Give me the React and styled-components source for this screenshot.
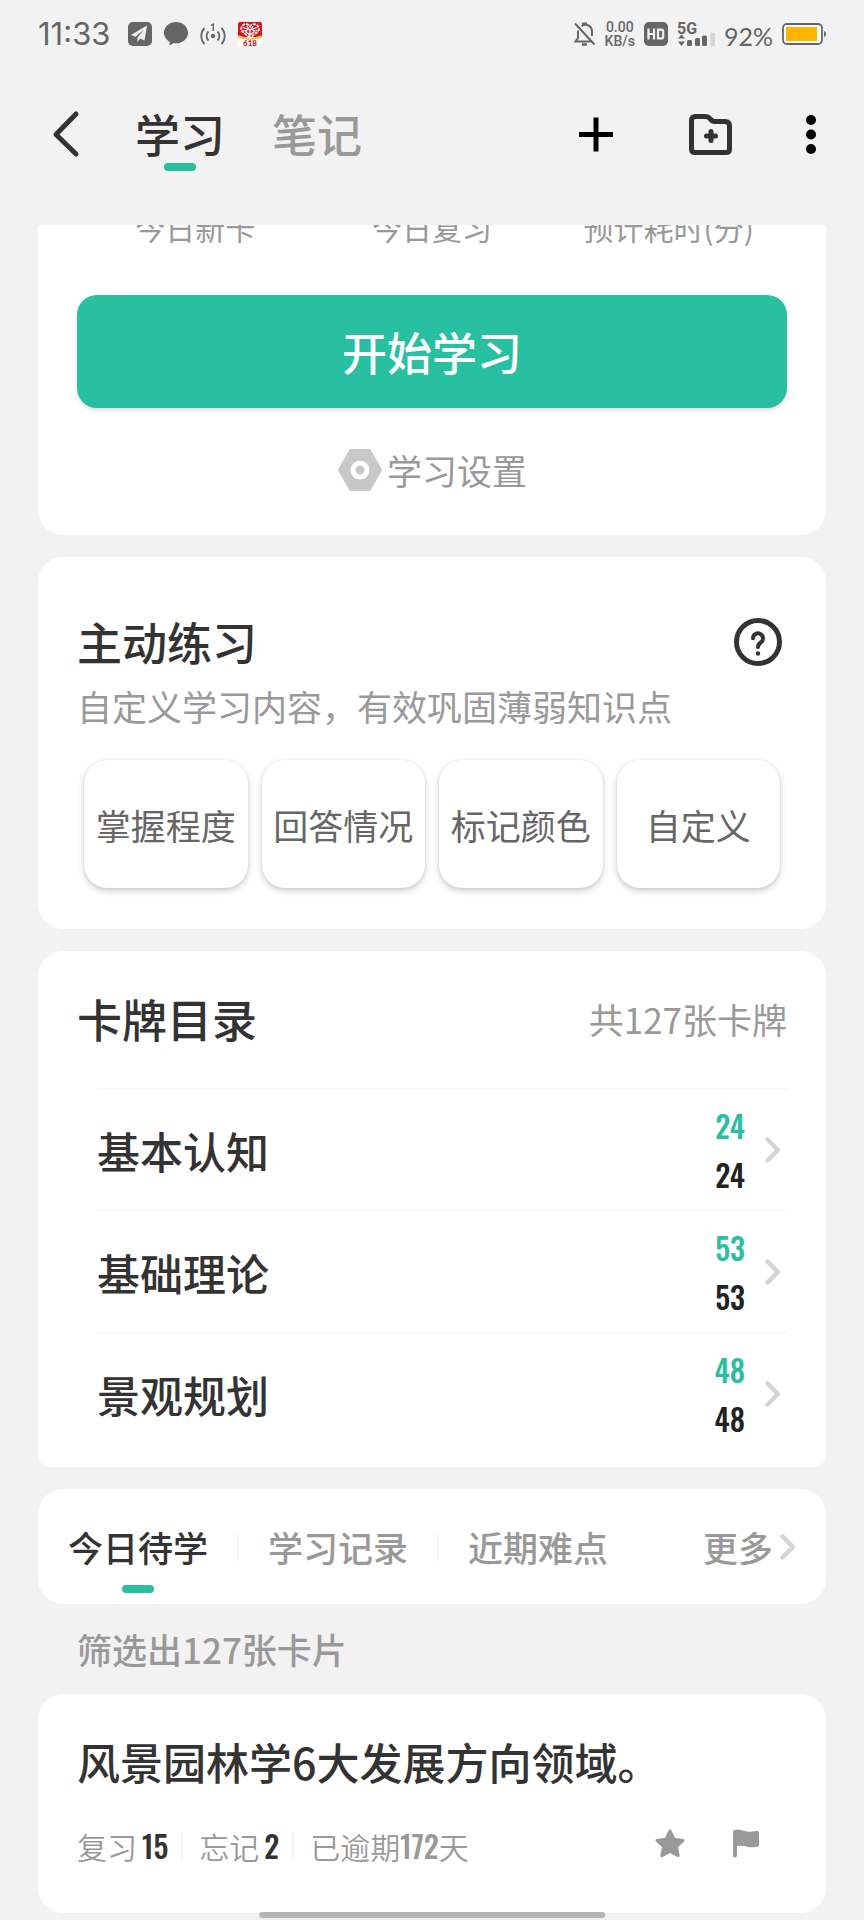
import React, { useState } from "react";
import styled, { createGlobalStyle } from "styled-components";

const GlobalStyle = createGlobalStyle`
  * { box-sizing: border-box; }
  body {
    margin: 0;
    background: #f2f2f2;
    color: #333;
    font-family: "Noto Sans CJK SC", sans-serif;
  }
  button {
    margin: 0;
    padding: 0;
    border: 0;
    background: none;
    color: inherit;
    font: inherit;
    cursor: pointer;
  }
  h1, h2, p, ul { margin: 0; padding: 0; list-style: none; }
  svg { display: block; flex: none; overflow: visible; }
`;

const green = "#29bfa1";
const narrow = '"Oswald", "Roboto Condensed", "Liberation Sans Narrow", "Liberation Sans", sans-serif';

const Screen = styled.div`
  display: flex;
  flex-direction: column;
  min-height: 100vh;
`;

/* Status bar */
const StatusBar = styled.div`
  display: flex;
  align-items: center;
  justify-content: space-between;
  height: 68px;
  padding: 0 38px;
  color: #666;
`;
const StatusGroup = styled.div`
  display: flex;
  align-items: center;
  gap: ${(p) => p.$gap}px;
`;
const Clock = styled.span`
  min-width: 78px;
  font: 400 31px/38px Inter, sans-serif;
`;
const NetSpeed = styled.span`
  display: flex;
  flex-direction: column;
  align-items: center;
  font: 500 14px/14px Roboto, sans-serif;
`;
const Percent = styled.span`
  padding-top: 4px;
  font: 400 25px/32px Lato, sans-serif;
`;

/* Header */
const Header = styled.header`
  display: flex;
  align-items: center;
  height: 132px;
  margin-bottom: 25px;
  padding: 0 38px;
`;
const BackButton = styled.button`
  display: flex;
  padding: 8px 15px;
`;
const HeaderTabs = styled.nav`
  display: flex;
  gap: 47px;
  margin-left: 40px;
`;
const HeaderTab = styled.button`
  display: flex;
  flex-direction: column;
  align-items: center;
  gap: 1px;
  padding-top: 9px;
  font-size: 45px;
  line-height: 56px;
  font-weight: 500;
  color: ${(p) => (p.$active ? "#333" : "#999")};
`;
const Marker = styled.span`
  width: 32px;
  height: 8px;
  border-radius: 4px;
  background: ${(p) => (p.$active ? green : "transparent")};
`;
const Actions = styled.div`
  display: flex;
  gap: 55px;
  margin-left: auto;
`;
const IconButton = styled.button`
  display: flex;
  justify-content: center;
  width: ${(p) => p.$width}px;
`;

/* Cards */
const Content = styled.main`
  display: flex;
  flex-direction: column;
  gap: 22px;
  padding: 0 38px 7px;
`;
const Card = styled.section`
  padding: ${(p) => p.$pad};
  border-radius: ${(p) => p.$radius || "25px"};
  background: #fff;
`;
const CardHead = styled.div`
  display: flex;
  align-items: center;
  justify-content: space-between;
`;
const CardTitle = styled.h2`
  font-size: 45px;
  line-height: 56px;
  font-weight: 500;
`;

const Stats = styled.div`
  display: grid;
  grid-template-columns: repeat(3, 1fr);
  grid-template-rows: 22px;
  align-items: end;
  justify-items: center;
  overflow: hidden;
  font-size: 30px;
  line-height: 40px;
  color: #999;
`;
const StartButton = styled.button`
  display: block;
  width: 100%;
  height: 113px;
  margin-top: 48px;
  border-radius: 20px;
  background: ${green};
  box-shadow: 0 2px 4px rgba(0, 0, 0, 0.15);
  color: #fff;
  font-size: 45px;
  font-weight: 500;
`;
const SettingsButton = styled.button`
  display: flex;
  align-items: center;
  gap: 4px;
  margin: 40px auto 0;
  font-size: 35px;
  line-height: 44px;
  color: #999;
`;

const Hint = styled.p`
  margin-top: 14px;
  font-size: 35px;
  line-height: 44px;
  color: #999;
`;
const Options = styled.div`
  display: grid;
  grid-template-columns: repeat(4, 1fr);
  gap: 14px;
  margin-top: 32px;
  padding: 0 7px;
`;
const Option = styled.button`
  height: 128px;
  border-radius: 23px;
  background: #fff;
  box-shadow: 0 3px 6px rgba(0, 0, 0, 0.2), 0 0 2px rgba(0, 0, 0, 0.1);
  color: #666;
  font-size: 35px;
  white-space: nowrap;
`;

const Total = styled.span`
  font-size: 35px;
  line-height: 44px;
  color: #999;
`;
const Catalog = styled.ul`
  margin: 41px 0 0;
  padding-left: 20px;
`;
const CatalogRow = styled.button`
  display: flex;
  align-items: center;
  width: 100%;
  height: 122px;
  padding-right: 6px;
  border-top: 1px solid #f4f4f4;
`;
const RowName = styled.span`
  flex: 1;
  text-align: left;
  font-size: 43px;
  line-height: 56px;
  font-weight: 500;
`;
const Counts = styled.span`
  display: flex;
  flex-direction: column;
  align-items: flex-end;
  margin-right: 20px;
`;
const Count = styled.span`
  font: 500 30px/49px ${narrow};
  color: ${(p) => (p.$due ? green : "#222")};
`;

const ListTabs = styled.nav`
  display: flex;
  align-items: center;
  gap: 29px;
  height: 115px;
  padding: 0 30px;
  border-radius: 25px;
  background: #fff;
`;
const ListTab = styled.button`
  display: flex;
  flex-direction: column;
  align-items: center;
  gap: 16px;
  padding-top: 24px;
  font-size: 35px;
  line-height: 44px;
  font-weight: 500;
  color: ${(p) => (p.$active ? "#333" : "#999")};
`;
const Divider = styled.span`
  width: 2px;
  height: 28px;
  background: #f4f4f4;
`;
const MoreButton = styled.button`
  display: flex;
  align-items: center;
  gap: 7px;
  margin-left: auto;
  font-size: 35px;
  line-height: 44px;
  font-weight: 500;
  color: #999;
`;

const Results = styled.section`
  margin-top: -22px;
`;
const ResultCount = styled.p`
  padding-left: 39px;
  font-size: 35px;
  line-height: 90px;
  font-weight: 500;
  color: #999;
`;
const Question = styled.h2`
  font-size: 43px;
  line-height: 56px;
  font-weight: 500;
`;
const Meta = styled.div`
  display: flex;
  align-items: center;
  margin-top: 35px;
  font-size: 30px;
  line-height: 44px;
  font-weight: 350;
  color: #999;
`;
const MetaItem = styled.span`
  display: flex;
  align-items: center;
  gap: ${(p) => p.$gap || 0}px;
`;
const MetaNumber = styled.span`
  font: 500 30px/44px ${narrow};
  color: ${(p) => (p.$muted ? "#999" : "#333")};
`;
const MetaDivider = styled(Divider)`
  margin: 0 16px 0 13px;
`;
const MetaActions = styled.div`
  display: flex;
  gap: 40px;
  margin-left: auto;
  padding: 0 23px 4px 0;
`;
const HomeBar = styled.div`
  position: fixed;
  bottom: 2px;
  left: 50%;
  width: 40%;
  height: 6px;
  border-radius: 3px;
  background: #b5b5b5;
  transform: translateX(-50%);
`;

const Chevron = () => (
  <svg width="16" height="26" viewBox="0 0 16 26" fill="none" stroke="#d4d4d4" strokeWidth="4.500" strokeLinecap="round" strokeLinejoin="round">
    <path d="M2.500 2.500 13 13 2.500 23.500" />
  </svg>
);

const SendIcon = () => (
  <svg width="24" height="24" viewBox="0 0 24 24">
    <rect width="24" height="24" rx="5" fill="#666" />
    <path d="M19 3.500 3 13l4.500 1.800L16 7.500 9.500 15.500v4.500l2.500-3.500 4.500 2z" fill="#f2f2f2" />
  </svg>
);
const BubbleIcon = () => (
  <svg width="24" height="24" viewBox="0 0 24 24" fill="#666">
    <path d="M12 0c6.600 0 12 4.700 12 10.700s-5.400 10.600-12 10.600c-.8 0-1.500 0-2.200-.2L5.500 23.500l.2-3.800C2.300 17.800 0 14.500 0 10.700 0 4.700 5.400 0 12 0z" />
  </svg>
);
const HotspotIcon = () => (
  <svg width="26" height="24" viewBox="0 0 26 24" fill="none" stroke="#666" strokeWidth="1.800">
    <circle cx="13" cy="14" r="2.200" fill="#666" stroke="none" />
    <path d="M8.500 9.500a6.300 6.300 0 0 0 0 9M17.500 9.500a6.300 6.300 0 0 1 0 9M4.500 6a11.500 11.500 0 0 0 0 16M21.500 6a11.500 11.500 0 0 1 0 16" />
    <path d="M11 3.500 13.300 2v7" strokeWidth="1.400" />
  </svg>
);
const ShopIcon = () => (
  <svg width="24" height="24" viewBox="0 0 24 24">
    <rect width="24" height="24" rx="2" fill="#fff" />
    <path d="M2 0h20a2 2 0 0 1 2 2v13H0V2a2 2 0 0 1 2-2z" fill="#d7141c" />
    <path d="M0 13.500c4 0 5 2.500 12 2.500s8-2.500 12-2.500V16c-3 0-6 1.800-12 1.800S3 16 0 16z" fill="#f6c24a" />
    <path d="M12 15.500 4 9.500a4.200 4.200 0 1 1 8-5.200 4.200 4.200 0 1 1 8 5.200z" fill="none" stroke="#fff" strokeWidth="1.800" strokeDasharray="3 1" />
    <path d="M5 5.500 9.500 7 8 10l4 3 4-3-1.500-3L19 5.500M9 4l3 5 3-5M12 9v4M5 8.500l3 .5M19 8.500l-3 .5" fill="none" stroke="#fff" strokeWidth="1.200" />
    <text x="12" y="23.500" textAnchor="middle" fontFamily="Lato, sans-serif" fontWeight="900" fontSize="8" fill="#d7141c">618</text>
  </svg>
);
const MutedBellIcon = () => (
  <svg width="22" height="24" viewBox="0 0 22 24" fill="none" stroke="#666" strokeWidth="2">
    <path d="M4 8.500V16L1.500 19.500H18M7.500 4.200C12 .8 18 4 18 9.500V14M1 1.500l19.500 21" />
    <path d="M8 1.800h5M8 22.500h5" strokeWidth="2.400" />
  </svg>
);
const HdIcon = () => (
  <svg width="24" height="24" viewBox="0 0 24 24">
    <rect width="24" height="24" rx="5" fill="#666" />
    <path d="M4.500 6.500v11M10 6.500v11M4.500 12H10M14 7.600h3.200a2 2 0 0 1 2 2v4.800a2 2 0 0 1-2 2H14z" fill="none" stroke="#f2f2f2" strokeWidth="2.200" />
  </svg>
);
const SignalIcon = () => (
  <svg width="38" height="24" viewBox="0 0 38 24" fill="#666">
    <text x="0" y="11.500" fontFamily="Roboto, sans-serif" fontWeight="700" fontSize="16">5G</text>
    <path d="M1 16.500 4.500 12.500 8 16.500zM1 19.500h7l-3.500 4.500z" />
    <rect x="10" y="18" width="5" height="6" rx="1.500" />
    <rect x="18" y="16" width="5" height="8" rx="1.500" />
    <rect x="25" y="13.500" width="5" height="10.500" rx="1.500" />
    <rect x="33" y="11" width="5" height="13" rx="1.500" fill="#d6d6d6" />
  </svg>
);
const BatteryIcon = () => (
  <svg width="44" height="22" viewBox="0 0 44 22">
    <rect x="1" y="1" width="39" height="20" rx="4" fill="#fff" stroke="#666" strokeWidth="1.800" />
    <rect x="4" y="4" width="31" height="14" fill="#ffb400" />
    <path d="M42 8c1.500.8 2 1.500 2 3s-.5 2.200-2 3z" fill="#666" />
  </svg>
);

const catalog = [
  { name: "基本认知", due: 24, total: 24 },
  { name: "基础理论", due: 53, total: 53 },
  { name: "景观规划", due: 48, total: 48 },
];
const options = ["掌握程度", "回答情况", "标记颜色", "自定义"];
const headerTabs = ["学习", "笔记"];
const listTabs = ["今日待学", "学习记录", "近期难点"];

export default function App() {
  const [page, setPage] = useState(0);
  const [list, setList] = useState(0);

  return (
    <Screen>
      <GlobalStyle />
      <StatusBar>
        <StatusGroup $gap={12}>
          <Clock>11:33</Clock>
          <SendIcon />
          <BubbleIcon />
          <HotspotIcon />
          <ShopIcon />
        </StatusGroup>
        <StatusGroup $gap={9}>
          <MutedBellIcon />
          <NetSpeed>
            <span>0.00</span>
            <span>KB/s</span>
          </NetSpeed>
          <HdIcon />
          <SignalIcon />
          <Percent>92%</Percent>
          <BatteryIcon />
        </StatusGroup>
      </StatusBar>

      <Header>
        <BackButton aria-label="返回">
          <svg width="27" height="48" viewBox="0 0 27 48" fill="none" stroke="#333" strokeWidth="5" strokeLinecap="round" strokeLinejoin="round">
            <path d="M23 4 3 24.500 23 44" />
          </svg>
        </BackButton>
        <HeaderTabs>
          {headerTabs.map((tab, i) => (
            <HeaderTab key={tab} $active={page === i} onClick={() => setPage(i)}>
              {tab}
              <Marker $active={page === i} />
            </HeaderTab>
          ))}
        </HeaderTabs>
        <Actions>
          <IconButton $width={60} aria-label="添加">
            <svg width="48" height="48" viewBox="0 0 48 48" stroke="#000" strokeWidth="5">
              <path d="M7 24.500H41M24 7.500v34" />
            </svg>
          </IconButton>
          <IconButton $width={60} aria-label="新建文件夹">
            <svg width="48" height="48" viewBox="0 0 48 48" fill="none" stroke="#333" strokeWidth="5" strokeLinejoin="round" strokeLinecap="round">
              <path d="M8.500 6.500H18c2.500 0 3.800.8 5 2.200 1.400 1.700 2.200 2.800 4.500 2.800H38c3 0 4.500 1.500 4.500 4.500v23c0 2.300-1 3.500-3.500 3.500H8c-2.500 0-3.500-1.200-3.500-3.500V10.500c0-2.600 1.200-4 4-4z" />
              <path d="M24 21.500v9M19.500 26h9" />
            </svg>
          </IconButton>
          <IconButton $width={30} aria-label="更多操作">
            <svg width="12" height="48" viewBox="0 0 12 48">
              <circle cx="6" cy="10" r="5" />
              <circle cx="6" cy="24.500" r="5" />
              <circle cx="6" cy="39" r="5" />
            </svg>
          </IconButton>
        </Actions>
      </Header>

      <Content>
        <Card $pad="0 39px 43px" $radius="0 0 25px 25px">
          <Stats>
            <span>今日新卡</span>
            <span>今日复习</span>
            <span>预计耗时(分)</span>
          </Stats>
          <StartButton>开始学习</StartButton>
          <SettingsButton>
            <svg width="46" height="44" viewBox="0 0 46 44">
              <path d="M14 3h18l11 19-11 19H14L3 22z" fill="#c8c8c8" stroke="#c8c8c8" strokeWidth="4" strokeLinejoin="round" />
              <circle cx="23" cy="22" r="7" fill="#c8c8c8" stroke="#fff" strokeWidth="5" />
            </svg>
            学习设置
          </SettingsButton>
        </Card>

        <Card $pad="57px 39px 41px">
          <CardHead>
            <CardTitle>主动练习</CardTitle>
            <IconButton $width={58} aria-label="帮助">
              <svg width="48" height="48" viewBox="0 0 48 48" fill="none" stroke="#333" strokeLinecap="round" strokeLinejoin="round">
                <circle cx="24" cy="24" r="21.500" strokeWidth="5" />
                <path d="M19 20.300a5 5 0 1 1 7.800 4.200c-2 1.400-2.800 2.400-2.800 4.500" strokeWidth="4" />
                <circle cx="24" cy="35.500" r="2.200" fill="#333" stroke="none" />
              </svg>
            </IconButton>
          </CardHead>
          <Hint>自定义学习内容，有效巩固薄弱知识点</Hint>
          <Options>
            {options.map((o) => (
              <Option key={o}>{o}</Option>
            ))}
          </Options>
        </Card>

        <Card $pad="40px 39px 13px" $radius="25px 25px 12px 12px">
          <CardHead>
            <CardTitle>卡牌目录</CardTitle>
            <Total>共127张卡牌</Total>
          </CardHead>
          <Catalog>
            {catalog.map((c) => (
              <li key={c.name}>
                <CatalogRow>
                  <RowName>{c.name}</RowName>
                  <Counts>
                    <Count $due>{c.due}</Count>
                    <Count>{c.total}</Count>
                  </Counts>
                  <Chevron />
                </CatalogRow>
              </li>
            ))}
          </Catalog>
        </Card>

        <ListTabs>
          {listTabs.map((tab, i) => (
            <React.Fragment key={tab}>
              {i > 0 && <Divider />}
              <ListTab $active={list === i} onClick={() => setList(i)}>
                {tab}
                <Marker $active={list === i} />
              </ListTab>
            </React.Fragment>
          ))}
          <MoreButton>
            更多
            <Chevron />
          </MoreButton>
        </ListTabs>

        <Results>
          <ResultCount>筛选出127张卡片</ResultCount>
          <Card as="article" $pad="39px 39px 45px">
            <Question>风景园林学6大发展方向领域。</Question>
            <Meta>
              <MetaItem $gap={5}>
                复习<MetaNumber>15</MetaNumber>
              </MetaItem>
              <MetaDivider />
              <MetaItem $gap={5}>
                忘记<MetaNumber>2</MetaNumber>
              </MetaItem>
              <MetaDivider />
              <MetaItem>
                已逾期<MetaNumber $muted>172</MetaNumber>天
              </MetaItem>
              <MetaActions>
                <IconButton $width={36} aria-label="收藏">
                  <svg width="32" height="32" viewBox="0 0 32 32" fill="#999" stroke="#999" strokeWidth="3" strokeLinejoin="round">
                    <path d="M16 3l4 8.200 9 1.200-6.600 6.200 1.700 9L16 23.200l-8.100 4.400 1.700-9L3 12.400l9-1.200z" />
                  </svg>
                </IconButton>
                <IconButton $width={36} aria-label="标记">
                  <svg width="28" height="32" viewBox="0 0 28 32" fill="#999">
                    <path d="M1 4c0-1 .5-1.700 1.500-2C9-.2 13 4.500 19 3.800c2.500-.3 4.500-.8 6-.8 1.300 0 2 .6 2 1.800v11.700c0 1.200-.6 1.900-1.800 2.200C17 21 13 16.500 5 18v9.500c0 1.200-.8 2-2 2s-2-.8-2-2z" />
                  </svg>
                </IconButton>
              </MetaActions>
            </Meta>
          </Card>
        </Results>
      </Content>
      <HomeBar />
    </Screen>
  );
}
